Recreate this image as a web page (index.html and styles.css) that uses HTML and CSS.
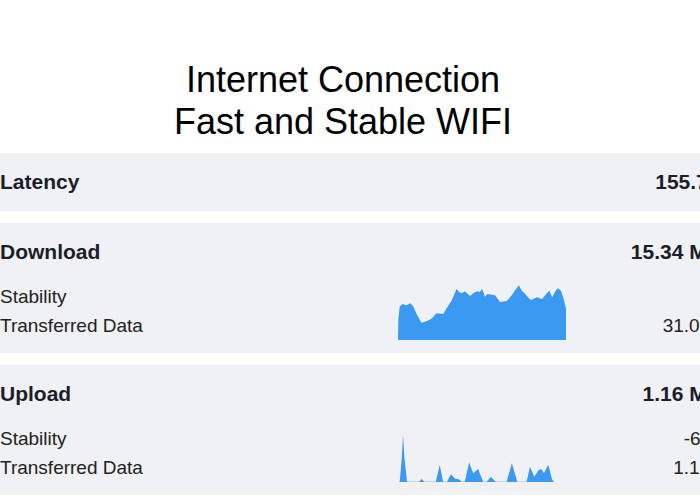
FILE: index.html
```html
<!DOCTYPE html>
<html lang="en">
<head>
    <meta charset="UTF-8">
    <title>Internet Connection</title>
    <link rel="stylesheet" href="styles.css">
</head>
<body>
    <h1 class="title">Internet Connection<br>Fast and Stable WIFI</h1>

    <div class="cards">
        <div class="card card-single">
            <div class="head"><span>Latency</span><span>155.7 ms</span></div>
        </div>

        <div class="card">
            <div class="head"><span>Download</span><span>15.34 Mbps</span></div>
            <div class="body">
                <div class="rows"><div>Stability</div><div>Transferred Data</div></div>
                <svg class="chart" viewBox="25 0 502 180" preserveAspectRatio="none">
                    <path d="M25 180 L26 120 L30 80 L38 72 L50 76 L62 70 L70 78 L82 105 L95 128 L110 124 L125 116 L140 100 L160 102 L172 82 L185 62 L200 27 L208 36 L215 40 L225 34 L240 48 L252 38 L262 34 L270 36 L276 26 L285 50 L292 42 L305 44 L315 46 L330 66 L350 63 L365 46 L377 28 L386 16 L395 32 L402 38 L410 48 L422 60 L440 52 L455 57 L470 40 L477 32 L486 52 L496 32 L503 25 L512 32 L520 56 L527 86 L527 180 Z" />
                </svg>
                <div class="rows vals"><div>12%</div><div>31.03 MB</div></div>
            </div>
        </div>

        <div class="card">
            <div class="head"><span>Upload</span><span>1.16 Mbps</span></div>
            <div class="body">
                <div class="rows"><div>Stability</div><div>Transferred Data</div></div>
                <svg class="chart chart-small" viewBox="25 6 470 180" preserveAspectRatio="none">
                    <path d="M25 186 L30 185 L36 120 L40 45 L44 110 L52 185 L88 185 L96 177 L104 185 L138 185 L150 135 L160 185 L172 185 L183 163 L196 176 L207 178 L216 185 L225 185 L238 127 L250 160 L265 147 L280 185 L290 185 L303 171 L318 185 L350 185 L366 130 L382 185 L410 185 L420 140 L433 170 L446 150 L455 148 L462 160 L475 134 L486 178 L492 186 Z" />
                </svg>
                <div class="rows vals"><div>-6.75%</div><div>1.16 MB</div></div>
            </div>
        </div>
    </div>
</body>
</html>
```

FILE: styles.css
```css
html { overflow: hidden; }
body { margin: 0; background: #fff; font-family: 'Liberation Sans', Arial, sans-serif; color: #222; }
.title { margin: 59px 0 10px; padding-right: 14px; font-size: 36px; line-height: 42px; font-weight: normal; text-align: center; color: #000; }
.cards { margin-left: -16px; width: 776px; display: flex; flex-direction: column; gap: 12px; }
.card { background: #f0f1f4; padding: 15px 16px 13px; }
.card-single { padding-bottom: 15px; }
.head { display: flex; justify-content: space-between; font-size: 21px; line-height: 28px; font-weight: bold; color: #1b1e29; }
.body { display: grid; grid-template-columns: 398px 168px 1fr; align-items: end; margin-top: 14px; }
.rows { font-size: 19px; line-height: 29px; }
.vals { text-align: right; }
.chart { display: block; width: 168px; height: 60px; }
.chart-small { width: 157px; }
.chart path { fill: #3b99f1; }
```
